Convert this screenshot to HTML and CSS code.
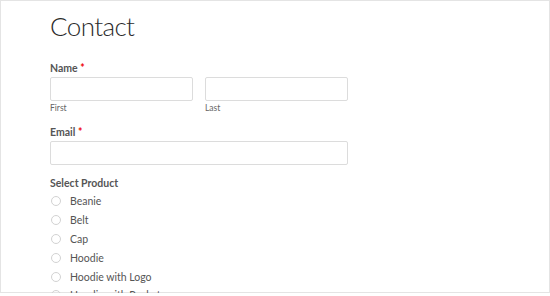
FILE: index.html
```html
<!DOCTYPE html>
<html lang="en">
<head>
    <meta charset="UTF-8">
    <meta name="viewport" content="width=device-width, initial-scale=1.0">
    <title>Contact</title>
    <link rel="stylesheet" href="styles.css">
</head>
<body>
<div class="frame">
    <h1 class="page-title">Contact</h1>

    <form class="contact-form">
        <div class="field">
            <label class="field-label">Name <span class="required">*</span></label>
            <div class="name-row">
                <div class="name-part">
                    <input type="text" class="text-input">
                    <span class="sub-label">First</span>
                </div>
                <div class="name-part">
                    <input type="text" class="text-input">
                    <span class="sub-label">Last</span>
                </div>
            </div>
        </div>

        <div class="field">
            <label class="field-label">Email <span class="required">*</span></label>
            <input type="email" class="text-input wide">
        </div>

        <div class="field">
            <label class="field-label">Select Product</label>
            <ul class="choices">
                <li><span class="radio"></span>Beanie</li>
                <li><span class="radio"></span>Belt</li>
                <li><span class="radio"></span>Cap</li>
                <li><span class="radio"></span>Hoodie</li>
                <li><span class="radio"></span>Hoodie with Logo</li>
                <li><span class="radio"></span>Hoodie with Pocket</li>
            </ul>
        </div>
    </form>
</div>
</body>
</html>
```

FILE: styles.css
```css
html, body {
    margin: 0;
    padding: 0;
    background: #fff;
    overflow: hidden;
}
body {
    font-family: "Lato", "Noto Sans", sans-serif;
    color: #555;
}
.frame {
    width: 550px;
    height: 293px;
    box-sizing: border-box;
    border: 1px solid #e4e4e4;
    padding-left: 49px;
}
.page-title {
    margin: 0;
    padding-top: 10px;
    font-size: 26px;
    font-weight: 300;
    line-height: 30px;
    letter-spacing: -0.6px;
    color: #2b2b2b;
}
.contact-form {
    margin-top: 21px;
}
.field {
    margin-bottom: 12px;
}
.field-label {
    display: block;
    font-size: 10.5px;
    font-weight: 700;
    line-height: 13px;
    margin-bottom: 2px;
    color: #555;
}
.required {
    color: #e00;
}
/* Name split into two inputs */
.name-row {
    display: flex;
    gap: 12px;
}
.name-part {
    display: flex;
    flex-direction: column;
}
.text-input {
    width: 143px;
    height: 24px;
    box-sizing: border-box;
    border: 1px solid #dcdcdc;
    border-radius: 2px;
    margin: 0;
    padding: 0 6px;
    background: #fff;
}
.text-input.wide {
    width: 298px;
}
.sub-label {
    font-size: 8.5px;
    line-height: 11px;
    margin-top: 2px;
    color: #666;
}
.choices {
    list-style: none;
    margin: 1px 0 0;
    padding: 0;
}
.choices li {
    display: flex;
    align-items: center;
    height: 18.8px;
    font-size: 10.5px;
    color: #555;
}
.radio {
    width: 10px;
    height: 10px;
    box-sizing: border-box;
    border: 1px solid #d2d2d2;
    border-radius: 50%;
    margin-left: 1px;
    margin-right: 9px;
    flex-shrink: 0;
}
```
